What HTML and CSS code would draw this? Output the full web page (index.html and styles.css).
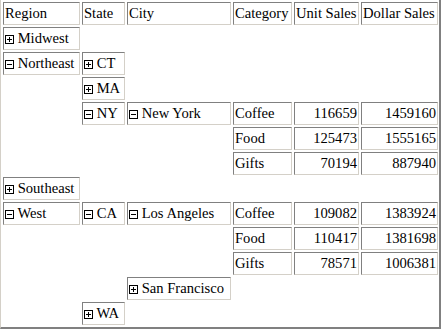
FILE: index.html
```html
<!DOCTYPE html>
<html>
<head>
<meta charset="utf-8">
<link rel="stylesheet" href="styles.css">
</head>
<body>
<div class="frame">
<table class="pivot">
<tr>
<td class="c w1">Region</td><td class="c w2">State</td><td class="c w3">City</td><td class="c w4">Category</td><td class="c w5">Unit Sales</td><td class="c w6">Dollar Sales</td>
</tr>
<tr><td class="c"><svg class="ic" width="9" height="9" viewBox="0 0 9 9"><rect x="0.5" y="0.5" width="8" height="8"/><path d="M2 4.5H7M4.5 2V7"/></svg> Midwest</td><td></td><td></td><td></td><td></td><td></td></tr>
<tr><td class="c"><svg class="ic" width="9" height="9" viewBox="0 0 9 9"><rect x="0.5" y="0.5" width="8" height="8"/><path d="M2 4.5H7"/></svg> Northeast</td><td class="c"><svg class="ic" width="9" height="9" viewBox="0 0 9 9"><rect x="0.5" y="0.5" width="8" height="8"/><path d="M2 4.5H7M4.5 2V7"/></svg> CT</td><td></td><td></td><td></td><td></td></tr>
<tr><td></td><td class="c"><svg class="ic" width="9" height="9" viewBox="0 0 9 9"><rect x="0.5" y="0.5" width="8" height="8"/><path d="M2 4.5H7M4.5 2V7"/></svg> MA</td><td></td><td></td><td></td><td></td></tr>
<tr><td></td><td class="c"><svg class="ic" width="9" height="9" viewBox="0 0 9 9"><rect x="0.5" y="0.5" width="8" height="8"/><path d="M2 4.5H7"/></svg> NY</td><td class="c"><svg class="ic" width="9" height="9" viewBox="0 0 9 9"><rect x="0.5" y="0.5" width="8" height="8"/><path d="M2 4.5H7"/></svg> New York</td><td class="c">Coffee</td><td class="c n">116659</td><td class="c n">1459160</td></tr>
<tr><td></td><td></td><td></td><td class="c">Food</td><td class="c n">125473</td><td class="c n">1555165</td></tr>
<tr><td></td><td></td><td></td><td class="c">Gifts</td><td class="c n">70194</td><td class="c n">887940</td></tr>
<tr><td class="c"><svg class="ic" width="9" height="9" viewBox="0 0 9 9"><rect x="0.5" y="0.5" width="8" height="8"/><path d="M2 4.5H7M4.5 2V7"/></svg> Southeast</td><td></td><td></td><td></td><td></td><td></td></tr>
<tr><td class="c"><svg class="ic" width="9" height="9" viewBox="0 0 9 9"><rect x="0.5" y="0.5" width="8" height="8"/><path d="M2 4.5H7"/></svg> West</td><td class="c"><svg class="ic" width="9" height="9" viewBox="0 0 9 9"><rect x="0.5" y="0.5" width="8" height="8"/><path d="M2 4.5H7"/></svg> CA</td><td class="c"><svg class="ic" width="9" height="9" viewBox="0 0 9 9"><rect x="0.5" y="0.5" width="8" height="8"/><path d="M2 4.5H7"/></svg> Los Angeles</td><td class="c">Coffee</td><td class="c n">109082</td><td class="c n">1383924</td></tr>
<tr><td></td><td></td><td></td><td class="c">Food</td><td class="c n">110417</td><td class="c n">1381698</td></tr>
<tr><td></td><td></td><td></td><td class="c">Gifts</td><td class="c n">78571</td><td class="c n">1006381</td></tr>
<tr><td></td><td></td><td class="c"><svg class="ic" width="9" height="9" viewBox="0 0 9 9"><rect x="0.5" y="0.5" width="8" height="8"/><path d="M2 4.5H7M4.5 2V7"/></svg> San Francisco</td><td></td><td></td><td></td></tr>
<tr><td></td><td class="c"><svg class="ic" width="9" height="9" viewBox="0 0 9 9"><rect x="0.5" y="0.5" width="8" height="8"/><path d="M2 4.5H7M4.5 2V7"/></svg> WA</td><td></td><td></td><td></td><td></td></tr>
</table>
</div>
</body>
</html>
```
FILE: styles.css
```css
html, body {
  margin: 0;
  padding: 0;
  background: #ffffff;
}
.frame {
  width: 441px;
  height: 329px;
  box-sizing: border-box;
  border-left: 1px solid #d4d0c8;
  border-right: 2px solid #808080;
  border-bottom: 2px solid #808080;
  overflow: hidden;
  background: #ffffff;
}
.pivot {
  border-collapse: separate;
  border-spacing: 2px;
  table-layout: fixed;
  width: 439px;
  font-family: "Liberation Serif", "Times New Roman", serif;
  font-size: 14.6px;
  color: #000;
}
.pivot td {
  box-sizing: border-box;
  height: 23px;
  padding: 0 1px;
  line-height: 19px;
  white-space: nowrap;
  vertical-align: middle;
  overflow: hidden;
}
.pivot td.c {
  border: 1px solid;
  border-color: #808080 #d4d0c8 #d4d0c8 #808080;
}
.pivot td.n {
  text-align: right;
}
.w1 { width: 77px; }
.w2 { width: 43px; }
.w3 { width: 104px; }
.w4 { width: 59px; }
.w5 { width: 65px; }
.w6 { width: 77px; }
.ic {
  vertical-align: -1px;
  fill: none;
  stroke: #000;
  stroke-width: 1;
  shape-rendering: crispEdges;
}
```
